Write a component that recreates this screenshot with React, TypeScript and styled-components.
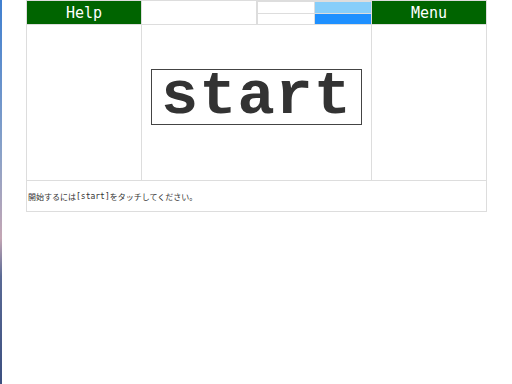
import React from "react";
import styled, { createGlobalStyle } from "styled-components";

const GlobalStyle = createGlobalStyle`
    html, body {
        margin: 0;
        padding: 0;
        background: #ffffff;
        font-family: "DejaVu Sans Mono", monospace;
    }
`;

export default function App() {
    return (
        <>
            <GlobalStyle />
            <Page>
                <EdgeStrip />
                <Board>
                    <HeaderButton>Help</HeaderButton>
                    <Cell />
                    <MiniGrid>
                        <MiniCell />
                        <MiniCell tone="light" />
                        <MiniCell />
                        <MiniCell tone="dark" />
                    </MiniGrid>
                    <HeaderButton>Menu</HeaderButton>

                    <BodyCell />
                    <StageCell>
                        <StartBox>start</StartBox>
                    </StageCell>
                    <BodyCell />

                    <Message>
                        開始するには<Mono>[start]</Mono>をタッチしてください。
                    </Message>
                </Board>
            </Page>
        </>
    );
}

const Page = styled.div`
    position: relative;
    width: 512px;
    height: 384px;
    padding-left: 26px;
    box-sizing: border-box;
    overflow: hidden;
`;

const EdgeStrip = styled.div`
    position: absolute;
    left: 0;
    top: 0;
    width: 2px;
    height: 384px;
    background: linear-gradient(
        to bottom,
        #3f7fd0 0%,
        #8aa2c8 40%,
        #c4a6b4 62%,
        #5a6a95 72%,
        #3c4f80 100%
    );
`;

const Board = styled.div`
    display: grid;
    grid-template-columns: 114px 114px 114px 114px;
    grid-template-rows: 23px 155px 30px;
    gap: 1px;
    padding: 1px;
    width: max-content;
    background: #dddddd;
`;

const Cell = styled.div`
    background: #ffffff;
`;

const HeaderButton = styled.div`
    display: flex;
    align-items: center;
    justify-content: center;
    background: #006400;
    color: #ffffff;
    font-family: "DejaVu Sans Mono", monospace;
    font-size: 15px;
`;

const MiniGrid = styled.div`
    display: grid;
    grid-template-columns: 1fr 1fr;
    grid-template-rows: 1fr 1fr;
    gap: 1px;
    padding: 1px 0 0 1px;
    background: #dddddd;
`;

const MiniCell = styled.div<{ tone?: "light" | "dark" }>`
    background: ${(p) =>
        p.tone === "light" ? "#87cefa" : p.tone === "dark" ? "#1e90ff" : "#ffffff"};
`;

const BodyCell = styled(Cell)``;

const StageCell = styled(Cell)`
    grid-column: span 2;
    display: flex;
    justify-content: center;
    padding-top: 44px;
    align-items: flex-start;
`;

const StartBox = styled.div`
    width: 209px;
    height: 54px;
    border: 1px solid #444444;
    display: flex;
    align-items: center;
    justify-content: center;
    font-family: "Liberation Mono", monospace;
    font-weight: bold;
    font-size: 62px;
    letter-spacing: 1px;
    line-height: 1;
    color: #333333;
`;

const Message = styled.div`
    grid-column: 1 / -1;
    background: #ffffff;
    display: flex;
    align-items: center;
    padding-left: 1px;
    font-family: "Noto Sans CJK JP", sans-serif;
    font-size: 8px;
    color: #333333;
`;

const Mono = styled.span`
    font-family: "DejaVu Sans Mono", monospace;
`;
